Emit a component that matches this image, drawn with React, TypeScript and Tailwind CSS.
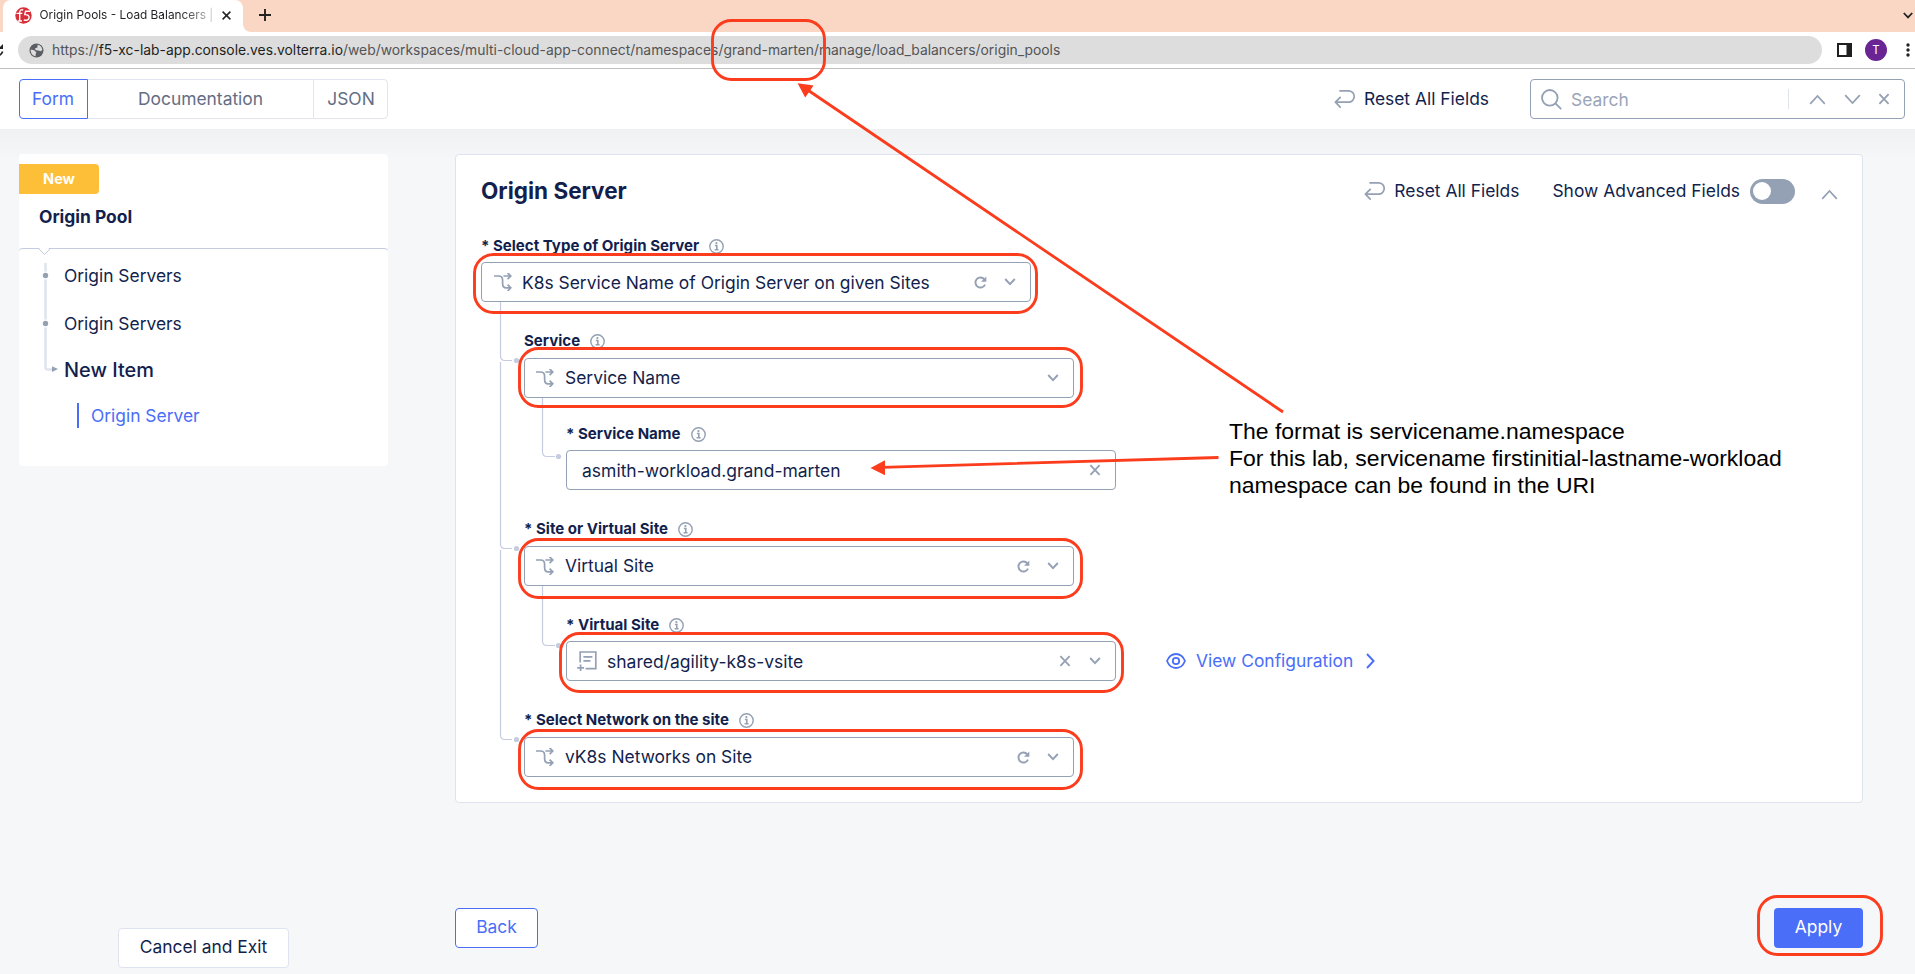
import type { ReactNode } from "react";

type IconProps = { className?: string };

const F5Logo = () => (
  <svg width="17" height="17" viewBox="0 0 17 17" className="shrink-0">
    <circle cx="8.5" cy="8.5" r="8.2" fill="#d8303a" />
    <path d="M8.2 3C6.4 2.2 4.7 3 4.7 5.4V13.6M1.4 6.4H7.4M2.8 14H7" stroke="#fff" strokeWidth="1.4" fill="none" />
    <path d="M15 4.2H10.6L9.8 7.6C12.6 7.4 14.4 8.6 14.1 10.9C13.8 13 11 13.9 8.8 12.8" stroke="#fff" strokeWidth="1.4" fill="none" />
  </svg>
);

const GlobeIcon = () => (
  <svg width="15" height="15" viewBox="0 0 15 15" className="shrink-0">
    <circle cx="7.5" cy="7.5" r="7" fill="#5b5e62" />
    <path d="M1.7 6.6L5.2 7.2L7.4 9.4L6.6 11.2L6.6 13.3C3.6 12.9 1.5 10.4 1.7 6.6Z" fill="#dddddd" />
    <path d="M8.6 1.8C11.3 2.2 13.2 4.3 13.3 6.9L11.6 8.3L9.4 7.4L6.8 7.2L5.9 5.6L8.4 4.4Z" fill="#dddddd" />
  </svg>
);

const ReturnIcon = () => (
  <svg width="21" height="20" viewBox="0 0 21 20" fill="none" stroke="#94a0b3" strokeWidth="1.7" strokeLinecap="round" strokeLinejoin="round" className="shrink-0">
    <path d="M6 1.8H14.5A5.4 5.4 0 0 1 14.5 13.2H1.6M6.2 8.4L1.4 13.2L6.2 18.2" />
  </svg>
);

const InfoIcon = () => (
  <svg width="15" height="15" viewBox="0 0 15 15" fill="none" stroke="#94a0b3" className="shrink-0">
    <circle cx="7.5" cy="7.5" r="6.7" strokeWidth="1.4" />
    <path d="M5.9 6.5H7.8V10.6M5.6 10.8H9.6" strokeWidth="1.6" />
    <circle cx="7.4" cy="4.1" r="1.1" fill="#94a0b3" stroke="none" />
  </svg>
);

const BranchIcon = () => (
  <svg width="18" height="18" viewBox="0 0 18 18" fill="none" stroke="#94a0b3" strokeWidth="1.7" className="shrink-0">
    <path d="M0 3H4.6C7.6 3 8.6 4.4 8.6 7.2V10.6C8.6 13.6 9.8 14.8 12.2 14.8H17M13.6 11.6L16.8 14.8L13.6 18" />
    <path d="M9.4 3H17M13.6 -0.2L16.8 3L13.6 6.2" />
  </svg>
);

const DocumentIcon = () => (
  <svg width="20" height="20" viewBox="0 0 20 20" fill="none" stroke="#94a0b3" strokeWidth="1.7" className="shrink-0">
    <path d="M3.2 11.4V1H18.8V17.6H8.6M6.4 5.8H15.4M6.4 9.8H13.4" />
    <path d="M3.6 13.6V20M0.2 16.8H7" />
  </svg>
);

const RefreshIcon = () => (
  <svg width="13" height="13" viewBox="0 0 13 13" fill="none" stroke="#94a0b3" className="shrink-0">
    <path d="M10.3 3.3A5 5 0 1 0 11 8.6" strokeWidth="1.9" />
    <path d="M12.3 0.4V5.8H7Z" fill="#94a0b3" stroke="none" />
  </svg>
);

const Chevron = ({ className = "" }: IconProps) => (
  <svg width="12" height="8" viewBox="0 0 12 8" fill="none" stroke="#94a0b3" strokeWidth="1.9" className={`shrink-0 ${className}`}>
    <path d="M1.2 1L6 6.2L10.8 1" />
  </svg>
);

const WideChevron = ({ className = "" }: IconProps) => (
  <svg width="17" height="11" viewBox="0 0 17 11" fill="none" stroke="#94a0b3" strokeWidth="1.7" className={`shrink-0 ${className}`}>
    <path d="M1.2 1.2L8.5 9L15.8 1.2" />
  </svg>
);

const CloseIcon = () => (
  <svg width="12" height="12" viewBox="0 0 12 12" stroke="#94a0b3" strokeWidth="1.8" className="shrink-0">
    <path d="M1.4 1.2L10.6 10.8M10.6 1.2L1.4 10.8" />
  </svg>
);

const EyeIcon = () => (
  <svg width="20" height="16" viewBox="0 0 20 16" fill="none" stroke="#4a6ef8" strokeWidth="1.8" className="shrink-0">
    <path d="M1 8C2.8 3.6 6 1 10 1S17.2 3.6 19 8C17.2 12.4 14 15 10 15S2.8 12.4 1 8Z" />
    <circle cx="10" cy="8" r="3.2" />
  </svg>
);

const BrowserChrome = () => (
  <header className="h-[69px] shrink-0 border-b border-[#bfbfbf] bg-white">
    <div className="flex h-8 items-stretch bg-[#fad6c5] pl-[3px]">
      <div className="relative flex w-[240px] items-center rounded-t-lg bg-white pb-0.5 pl-3 pr-3">
        <F5Logo />
        <span className="ml-[7.5px] w-[176px] overflow-hidden whitespace-nowrap bg-linear-to-r from-[#1f2023] from-80% to-[#d5d5d5] bg-clip-text text-[11.85px] text-transparent">
          Origin Pools - Load Balancers |
        </span>
        <svg width="9" height="9" viewBox="0 0 9 9" stroke="#222" strokeWidth="1.5" className="ml-[8px] shrink-0">
          <path d="M0.6 0.6L8.4 8.4M8.4 0.6L0.6 8.4" />
        </svg>
        <svg width="8" height="8" viewBox="0 0 8 8" className="absolute bottom-0 left-full">
          <path d="M0 0V8H8C3.6 8 0 4.4 0 0Z" fill="#fff" />
        </svg>
      </div>
      <div className="flex flex-1 items-center justify-between pb-0.5 pl-4 pr-0.5">
        <svg width="12" height="12" viewBox="0 0 12 12" stroke="#222" strokeWidth="1.9">
          <path d="M6 0V12M0 6H12" />
        </svg>
        <svg width="10" height="7" viewBox="0 0 10 7" fill="none" stroke="#222" strokeWidth="1.8">
          <path d="M0.8 1L5 5.4L9.2 1" />
        </svg>
      </div>
    </div>
    <div className="flex h-9 items-center">
      <svg width="18" height="14" viewBox="0 0 18 14" className="shrink-0">
        <path d="M3 1V6H-2Z" fill="#222" />
        <path d="M2.6 8.6C2 10.6 1 11.6 -1 12.6" stroke="#222" strokeWidth="1.8" fill="none" />
      </svg>
      <div className="flex h-7 w-[1804px] items-center rounded-full bg-[#dddddd] pl-[10.5px]">
        <GlobeIcon />
        <span className="ml-[8.5px] whitespace-nowrap text-[13.86px] text-[#535456]">
          https://<span className="text-[#1e1f21]">f5-xc-lab-app.console.ves.volterra.io</span>
          /web/workspaces/multi-cloud-app-connect/namespaces/grand-marten/manage/load_balancers/origin_pools
        </span>
      </div>
      <svg width="15" height="14" viewBox="0 0 15 14" className="ml-[15px] shrink-0">
        <rect x="1" y="1" width="13" height="12" fill="none" stroke="#1f1f1f" strokeWidth="2" />
        <rect x="9.5" y="1" width="4.5" height="12" fill="#1f1f1f" />
      </svg>
      <div className="ml-[13px] flex size-[22px] shrink-0 items-center justify-center rounded-full bg-[#6b2494] text-[11.5px] text-white">T</div>
      <svg width="4" height="14" viewBox="0 0 4 14" fill="#222" className="ml-[19px] shrink-0">
        <circle cx="2" cy="2" r="1.7" />
        <circle cx="2" cy="7" r="1.7" />
        <circle cx="2" cy="12" r="1.7" />
      </svg>
    </div>
  </header>
);

const ResetLink = () => (
  <span className="flex items-center gap-[9px] whitespace-nowrap">
    <ReturnIcon />
    Reset All Fields
  </span>
);

const Toolbar = () => (
  <div className="flex h-[60px] shrink-0 items-center bg-white pl-[19px] pr-[10px]">
    <div className="flex h-10 text-[#636e83]">
      <div className="flex w-[69px] items-center justify-center rounded-l border border-[#4a6ef8] pr-px text-[#4a6ef8]">Form</div>
      <div className="flex w-[225px] items-center justify-center border-y border-[#e2e5f0]">Documentation</div>
      <div className="flex w-[75px] items-center justify-center rounded-r border border-[#e2e5f0] pl-px">JSON</div>
    </div>
    <div className="ml-auto flex items-center">
      <ResetLink />
      <div className="ml-[41px] flex h-10 w-[375px] items-center rounded border border-[#94a0b3] pl-[10px] pr-[14px]">
        <svg width="21" height="21" viewBox="0 0 21 21" fill="none" stroke="#94a0b3" strokeWidth="1.8" className="shrink-0">
          <circle cx="8.8" cy="8.8" r="7.8" />
          <path d="M14.4 14.4L20.2 20.2" />
        </svg>
        <span className="ml-[9px] pt-0.5 text-[#9aa5b8]">Search</span>
        <div className="ml-auto h-5 w-px bg-[#dfe3ec]" />
        <WideChevron className="ml-5 rotate-180" />
        <WideChevron className="ml-[18px] mr-[17px]" />
        <CloseIcon />
      </div>
    </div>
  </div>
);

const Sidebar = () => (
  <aside className="flex w-[369px] flex-col">
    <div className="h-[94px] rounded-t bg-white pt-[10px]">
      <div className="flex h-[30px] w-20 items-center justify-center rounded-r bg-[#fdbe38] text-[14.5px] font-bold text-white">New</div>
      <div className="pl-5 pt-[11px] text-[17.4px] font-bold leading-6">Origin Pool</div>
    </div>
    <div className="relative h-[218px] rounded border-t border-[#c5cbe0] bg-white pt-[11px]">
      <svg width="40" height="130" viewBox="0 0 40 130" className="absolute left-[10px] -top-px" fill="none">
        <path d="M10 0H20L15.5 6.5Z" fill="#fff" />
        <path d="M9.5 0.5L15.5 6.5L21.5 0.5" stroke="#c5cbe0" />
        <path d="M16.5 15V119Q16.5 121.5 19 121.5H25" stroke="#dfe4ef" strokeWidth="2.6" />
        <circle cx="16.5" cy="27.5" r="4" fill="#fff" />
        <circle cx="16.5" cy="27.5" r="2.7" fill="#94a0b3" />
        <circle cx="16.5" cy="75.5" r="4" fill="#fff" />
        <circle cx="16.5" cy="75.5" r="2.7" fill="#94a0b3" />
        <path d="M23 118.2L29 121L23 124Z" fill="#94a0b3" />
      </svg>
      <div className="flex flex-col pl-[45px] text-[17.4px]">
        <span className="h-8 leading-8">Origin Servers</span>
        <span className="mt-4 h-8 leading-8">Origin Servers</span>
        <span className="mt-[14px] h-8 text-[19.9px] font-medium leading-8">New Item</span>
        <span className="ml-[13px] mt-[17px] h-[25px] border-l-2 border-[#4a6ef8] pl-3 leading-[25px] text-[#4a6ef8]">Origin Server</span>
      </div>
    </div>
  </aside>
);

const FieldLabel = ({ children }: { children: ReactNode }) => (
  <div className="flex h-5 items-center gap-[10px] whitespace-nowrap text-[15.05px] font-bold leading-5">
    {children}
    <InfoIcon />
  </div>
);

type SelectProps = { icon?: ReactNode; value: string; actions: ReactNode; className?: string; valueClass?: string };

const SelectBox = ({ icon, value, actions, className = "", valueClass = "" }: SelectProps) => (
  <div className={`flex h-10 w-[550px] items-center rounded border border-[#94a0b3] bg-white pr-[14px] ${className}`}>
    {icon}
    <span className={`whitespace-nowrap ${valueClass}`}>{value}</span>
    <div className="ml-auto flex items-center">{actions}</div>
  </div>
);

const RefreshActions = () => (
  <>
    <RefreshIcon />
    <Chevron className="ml-[17px]" />
  </>
);

const TreeLines = () => (
  <svg width="120" height="600" viewBox="455 154 120 600" fill="none" stroke="#c5cbe0" strokeWidth="1.2" className="pointer-events-none absolute -left-px -top-px">
    <path d="M500.5 302V356Q500.5 360.5 505 360.5H512" />
    <path d="M500.5 362V544Q500.5 548.5 505 548.5H512" />
    <path d="M500.5 550V735Q500.5 739.5 505 739.5H512" />
    <path d="M542.5 398V452Q542.5 456.5 547 456.5H555" />
    <path d="M542.5 586V641Q542.5 645.5 547 645.5H555" />
    <g fill="#c5cbe0" stroke="none">
      <circle cx="516.5" cy="360.5" r="2.6" />
      <circle cx="516.5" cy="548.5" r="2.6" />
      <circle cx="516.5" cy="739.5" r="2.6" />
      <circle cx="558.5" cy="456.5" r="2.6" />
      <circle cx="558.5" cy="645.5" r="2.6" />
    </g>
  </svg>
);

const OriginServerCard = () => (
  <section className="relative h-[649px] w-[1408px] rounded border border-[#dfe3f0] bg-white">
    <TreeLines />
    <div className="flex h-[72px] items-center pl-[25px] pr-[24px]">
      <h2 className="text-[22.5px] font-bold">Origin Server</h2>
      <div className="ml-auto flex items-center">
        <ResetLink />
        <span className="ml-[33px] whitespace-nowrap">Show Advanced Fields</span>
        <div className="ml-[10px] flex h-[25px] w-[45px] items-center rounded-full bg-[#94a0b3] pl-[3px]">
          <div className="size-[18px] rounded-full bg-white" />
        </div>
        <WideChevron className="ml-[26px] mt-1.5 rotate-180" />
      </div>
    </div>
    <div className="flex flex-col pl-[25px]">
      <div className="mt-[9px] flex flex-col gap-1.5">
        <FieldLabel>* Select Type of Origin Server</FieldLabel>
        <SelectBox valueClass="pt-0.5" icon={<span className="ml-3 mr-[10px]"><BranchIcon /></span>} value="K8s Service Name of Origin Server on given Sites" actions={<RefreshActions />} />
      </div>
      <div className="mt-[29px] flex flex-col gap-[7px] pl-[43px]">
        <FieldLabel>Service</FieldLabel>
        <SelectBox icon={<span className="ml-[11px] mr-[11px]"><BranchIcon /></span>} value="Service Name" actions={<Chevron />} />
      </div>
      <div className="mt-[26px] flex flex-col gap-1.5 pl-[85px]">
        <FieldLabel>* Service Name</FieldLabel>
        <SelectBox className="pl-[15px]" valueClass="pt-0.5 text-[17.5px]" value="asmith-workload.grand-marten" actions={<CloseIcon />} />
      </div>
      <div className="mt-[29px] flex flex-col gap-[7px] pl-[43px]">
        <FieldLabel>* Site or Virtual Site</FieldLabel>
        <SelectBox icon={<span className="ml-[11px] mr-[11px]"><BranchIcon /></span>} value="Virtual Site" actions={<RefreshActions />} />
      </div>
      <div className="mt-[29px] flex flex-col gap-1.5 pl-[85px]">
        <FieldLabel>* Virtual Site</FieldLabel>
        <div className="flex items-center">
          <SelectBox
            valueClass="pt-0.5 text-[17.5px]"
            icon={<span className="ml-[10px] mr-[10px]"><DocumentIcon /></span>}
            value="shared/agility-k8s-vsite"
            actions={<><CloseIcon /><Chevron className="ml-[18px]" /></>}
          />
          <div className="ml-[50px] flex items-center whitespace-nowrap text-[#4a6ef8]">
            <EyeIcon />
            <span className="ml-[10px]">View Configuration</span>
            <svg width="9" height="16" viewBox="0 0 9 16" fill="none" stroke="#4a6ef8" strokeWidth="1.9" className="ml-[13px]">
              <path d="M1 1L7.6 8L1 15" />
            </svg>
          </div>
        </div>
      </div>
      <div className="mt-[29px] flex flex-col gap-[7px] pl-[43px]">
        <FieldLabel>* Select Network on the site</FieldLabel>
        <SelectBox icon={<span className="ml-[11px] mr-[11px]"><BranchIcon /></span>} value="vK8s Networks on Site" actions={<RefreshActions />} />
      </div>
    </div>
  </section>
);

const HIGHLIGHTS = [
  { x: 712.5, y: 20.5, w: 112, h: 59 },
  { x: 474.5, y: 254.5, w: 562, h: 58 },
  { x: 519.5, y: 348.5, w: 562, h: 58 },
  { x: 519.5, y: 539.5, w: 562, h: 58 },
  { x: 560.5, y: 633.5, w: 562, h: 58 },
  { x: 519.5, y: 730.5, w: 562, h: 58 },
  { x: 1758.5, y: 896.5, w: 123, h: 58 },
];

const Annotations = () => (
  <div className="pointer-events-none absolute inset-0">
    <svg width="1915" height="974" viewBox="0 0 1915 974" fill="none" stroke="#fb3c1d" className="absolute inset-0">
      {HIGHLIGHTS.map((b) => (
        <rect key={`${b.x}-${b.y}`} x={b.x} y={b.y} width={b.w} height={b.h} rx="19" strokeWidth="2.9" />
      ))}
      <path d="M1283 412L807 89.5M1218.5 457.5L882 467.3" strokeWidth="2.8" />
      <path d="M797.6 83.2L813.6 85.4L805.2 97.4ZM870.5 467.9L885 460.2L885 475.2Z" fill="#fb3c1d" stroke="none" />
    </svg>
    <div className="absolute left-[1229px] top-[417.5px] whitespace-nowrap font-['Liberation_Sans',sans-serif] text-[22.98px] leading-[27px] text-black">
      <p>The format is servicename.namespace</p>
      <p>For this lab, servicename firstinitial-lastname-workload</p>
      <p>namespace can be found in the URI</p>
    </div>
  </div>
);

export default function App() {
  return (
    <div className="relative flex h-[974px] w-[1915px] flex-col overflow-hidden bg-[#f6f7f9] font-[Inter,sans-serif] text-[17.42px] leading-6 text-[#131f4d]">
      <BrowserChrome />
      <Toolbar />
      <main className="flex flex-1 items-start bg-linear-to-b from-[#f0f1f3] to-[#f6f7f9] to-[32px] pl-[19px] pt-[25px]">
        <div className="flex flex-col">
          <Sidebar />
          <button className="ml-[99px] mt-[462px] h-10 w-[171px] whitespace-nowrap rounded border border-[#dfe3f0] bg-white pb-0.5">Cancel and Exit</button>
        </div>
        <div className="ml-[67px] flex w-[1408px] flex-col">
          <OriginServerCard />
          <div className="mt-[105px] flex justify-between">
            <button className="h-10 w-[83px] rounded border border-[#4a6ef8] bg-white pb-0.5 text-[#4a6ef8]">Back</button>
            <button className="h-10 w-[89px] rounded bg-[#4a6ef8] pb-0.5 text-white">Apply</button>
          </div>
        </div>
      </main>
      <Annotations />
    </div>
  );
}
